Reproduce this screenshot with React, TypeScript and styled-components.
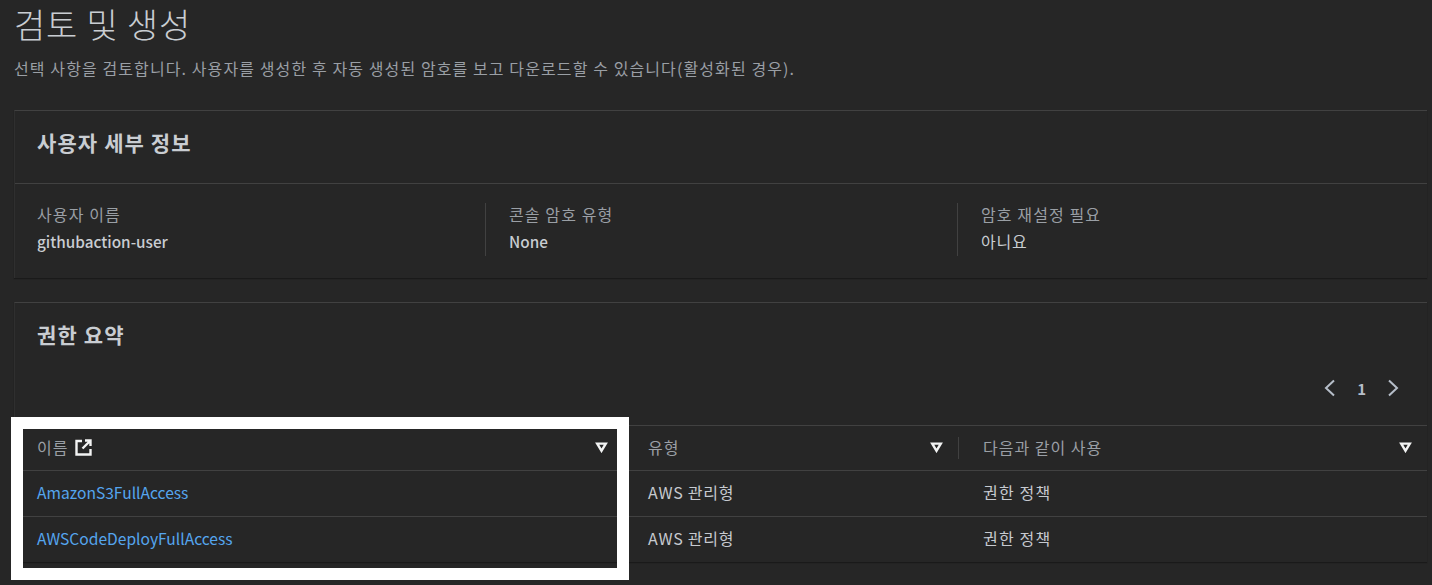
import React from 'react';
import styled, { createGlobalStyle } from 'styled-components';

const GlobalStyle = createGlobalStyle`
    html, body {
        margin: 0;
        padding: 0;
        background: #262626;
        overflow: hidden;
    }
    body {
        font-family: "Noto Sans CJK KR", "Noto Sans", sans-serif;
        color: #d1d5db;
    }
`;

const details = [
    { label: '사용자 이름', value: 'githubaction-user', korean: false },
    { label: '콘솔 암호 유형', value: 'None', korean: false },
    { label: '암호 재설정 필요', value: '아니요', korean: true },
];

const columns = [
    { label: '이름', external: true },
    { label: '유형' },
    { label: '다음과 같이 사용' },
];

const rows = [
    { name: 'AmazonS3FullAccess', type: 'AWS 관리형', use: '권한 정책' },
    { name: 'AWSCodeDeployFullAccess', type: 'AWS 관리형', use: '권한 정책' },
];

function SortIcon() {
    return (
        <svg width="13" height="11" viewBox="0 0 13 11">
            <path d="M2.2 1.6h8.6L6.5 8.8z" fill="none" stroke="#f2f3f3" strokeWidth="2.4" strokeLinejoin="miter" />
        </svg>
    );
}

function ExternalIcon() {
    return (
        <svg width="17" height="17" viewBox="0 0 17 17">
            <path d="M7 2H1.5v13.5h14V10M10 1.5h5.5V7M15.5 1.5L7.5 9.5" fill="none" stroke="#f2f3f3" strokeWidth="2.4" />
        </svg>
    );
}

function Chevron({ dir }: { dir: 'left' | 'right' }) {
    return (
        <svg width="12" height="18" viewBox="0 0 12 18">
            <path d={dir === 'left' ? 'M10 1.5L2 9l8 7.5' : 'M2 1.5L10 9l-8 7.5'} fill="none" stroke="#b6bec9" strokeWidth="2" />
        </svg>
    );
}

export default function App() {
    return (<Page>
        <GlobalStyle />
        <Title>검토 및 생성</Title>
        <Description>선택 사항을 검토합니다. 사용자를 생성한 후 자동 생성된 암호를 보고 다운로드할 수 있습니다(활성화된 경우).</Description>

        <DetailCard>
            <CardHeader>사용자 세부 정보</CardHeader>
            <DetailGrid>
                {details.map((d, k) => <DetailCell key={k} $first={k === 0}>
                    <DetailLabel>{d.label}</DetailLabel>
                    <DetailValue $korean={d.korean}>{d.value}</DetailValue>
                </DetailCell>)}
            </DetailGrid>
        </DetailCard>

        <PermissionCard>
            <PermissionTitle>권한 요약</PermissionTitle>
            <Pagination>
                <Chevron dir="left" />
                <PageNumber>1</PageNumber>
                <Chevron dir="right" />
            </Pagination>
            <HeadRow>
                {columns.map((c, k) => <HeadCell key={k}>
                    <HeadLabel>
                        {c.label}
                        {c.external && <ExternalIcon />}
                    </HeadLabel>
                    <SortIcon />
                </HeadCell>)}
            </HeadRow>
            {rows.map((r, k) => <BodyRow key={k}>
                <NameLink>{r.name}</NameLink>
                <BodyCell>{r.type}</BodyCell>
                <UseCell>{r.use}</UseCell>
            </BodyRow>)}
        </PermissionCard>

        <Highlight />
    </Page>);
}

const Page = styled.div`
    position: relative;
    width: 1432px;
    height: 585px;
    box-sizing: border-box;
    padding: 1px 5px 0 14px;
    overflow: hidden;
    background: #262626;
`;

const Title = styled.h1`
    margin: 0;
    height: 52px;
    font-size: 34px;
    line-height: 46px;
    letter-spacing: 0.8px;
    font-weight: 300;
    color: #c9cdd2;
`;

const Description = styled.p`
    margin: 3px 0 0;
    height: 24px;
    font-size: 16px;
    line-height: 24px;
    letter-spacing: 1.1px;
    white-space: nowrap;
    color: #9a9fa5;
`;

const Card = styled.section`
    border-top: 1px solid #414141;
    border-left: 1px solid #2f2f2f;
    box-shadow: 0 1px 1px #1a1a1a;
`;

const DetailCard = styled(Card)`
    margin-top: 30px;
    height: 167px;
`;

const CardHeader = styled.h2`
    margin: 0;
    height: 73px;
    box-sizing: border-box;
    padding: 15px 22px 0;
    font-size: 21px;
    line-height: 32px;
    letter-spacing: 1.1px;
    font-weight: 700;
    color: #c9cdd2;
    border-bottom: 1px solid #414141;
`;

const DetailGrid = styled.div`
    display: grid;
    grid-template-columns: 470px 472px 1fr;
    padding: 19px 0 0 0;
`;

const DetailCell = styled.div<{ $first?: boolean }>`
    height: 53px;
    padding-left: ${props => props.$first ? '22px' : '23px'};
    border-left: ${props => props.$first ? 'none' : '1px solid #414141'};
`;

const DetailLabel = styled.div`
    font-size: 16px;
    line-height: 22px;
    letter-spacing: 1.1px;
    color: #9a9fa5;
`;

const DetailValue = styled.div<{ $korean?: boolean }>`
    margin-top: 5px;
    font-size: ${props => props.$korean ? '16px' : '15.3px'};
    line-height: 22px;
    letter-spacing: ${props => props.$korean ? '0.8px' : '0'};
    font-weight: ${props => props.$korean ? 400 : 500};
    color: #c9cdd2;
`;

const PermissionCard = styled(Card)`
    margin-top: 24px;
    height: 260px;
    box-sizing: border-box;
`;

const PermissionTitle = styled.h2`
    margin: 0;
    height: 68px;
    padding: 15px 22px 0;
    box-sizing: border-box;
    font-size: 21px;
    line-height: 32px;
    letter-spacing: 1.1px;
    font-weight: 700;
    color: #c9cdd2;
`;

const Pagination = styled.div`
    display: flex;
    align-items: center;
    justify-content: flex-end;
    gap: 21px;
    height: 34px;
    padding-right: 28px;
`;

const PageNumber = styled.span`
    font-size: 15px;
    font-weight: 700;
    color: #b6bec9;
`;

const rowGrid = `
    display: grid;
    grid-template-columns: 610px 333px 1fr;
    border-top: 1px solid #414141;
`;

const HeadRow = styled.div`
    ${rowGrid}
    margin-top: 20px;
    height: 44px;
`;

const HeadCell = styled.div`
    display: flex;
    align-items: center;
    justify-content: space-between;
    padding: 0 17px 2px 22px;
    position: relative;
    & + & {
        padding-left: 23px;
        padding-right: 15px;
    }
    & + &::before {
        content: '';
        position: absolute;
        left: 0;
        top: 11px;
        bottom: 11px;
        width: 1px;
        background: #414141;
    }
    &:last-child {
        padding-left: 25px;
    }
`;

const HeadLabel = styled.span`
    display: flex;
    align-items: center;
    gap: 7px;
    font-size: 16px;
    letter-spacing: 1px;
    color: #9a9fa5;
`;

const BodyRow = styled.div`
    ${rowGrid}
    height: 45px;
    box-sizing: content-box;
    align-items: center;
    &:last-child {
        border-bottom: 1px solid #1a1a1a;
    }
`;

const NameLink = styled.a`
    padding: 0 0 4px 22px;
    font-size: 15.6px;
    color: #55a5ee;
`;

const BodyCell = styled.div`
    padding: 0 0 4px 23px;
    font-size: 16px;
    letter-spacing: 0.75px;
    color: #c6cad0;
`;

const UseCell = styled(BodyCell)`
    padding-left: 25px;
    letter-spacing: 1.2px;
`;

const Highlight = styled.div`
    position: absolute;
    left: 11px;
    top: 417px;
    width: 594px;
    height: 139px;
    border: 12px solid #ffffff;
`;
